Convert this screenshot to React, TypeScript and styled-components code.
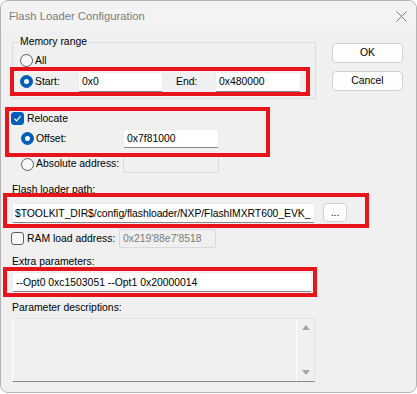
import React from 'react';
import styled, { createGlobalStyle } from 'styled-components';

const GlobalStyle = createGlobalStyle`
  html, body {
    margin: 0;
    padding: 0;
    background: #ffffff;
  }
  body {
    font-family: "Liberation Sans", Arial, sans-serif;
    font-size: 10.4px;
    color: #000000;
  }
  * {
    box-sizing: border-box;
  }
`;

const Window = styled.div`
  width: 417px;
  height: 393px;
  background: #f0f0f0;
  border: 1px solid #b4b4b4;
  border-radius: 8px;
  overflow: hidden;
  display: flex;
  flex-direction: column;
`;

const TitleBar = styled.div`
  height: 30px;
  flex-shrink: 0;
  display: flex;
  align-items: center;
  justify-content: space-between;
  padding: 0 9px 0 8px;
  background: #f3f3f3;
  color: #7b7b7b;
  font-size: 11.25px;
`;

const Body = styled.div`
  display: flex;
  align-items: flex-start;
  padding: 4px 0 0 11px;
`;

const LeftColumn = styled.div`
  width: 304px;
  flex-shrink: 0;
  display: flex;
  flex-direction: column;
`;

const RightColumn = styled.div`
  margin: 8px 0 0 16px;
  display: flex;
  flex-direction: column;
  gap: 8px;
`;

const GroupBox = styled.fieldset`
  margin: 0;
  padding: 0 0 2px 0;
  min-width: 0;
  width: 304px;
  border: 1px solid #dcdcdc;
`;

const GroupTitle = styled.legend`
  margin-left: 6px;
  padding: 0 1px;
  line-height: 14px;
`;

// red annotation frame drawn over the dialog
const Highlight = styled.div<{ $top: number; $left: number; $width: number; $height: number; $padTop?: number; $padLeft?: number }>`
  position: relative;
  flex-shrink: 0;
  margin: ${p => p.$top}px 0 0 ${p => p.$left}px;
  width: ${p => p.$width}px;
  height: ${p => p.$height}px;
  padding: ${p => p.$padTop ?? 0}px 0 0 ${p => p.$padLeft ?? 0}px;
  border: 4px solid #e8141c;
  display: flex;
  flex-direction: column;
`;

const Row = styled.div<{ $height: number; $top?: number; $indent?: number; $align?: string }>`
  display: flex;
  align-items: ${p => p.$align ?? 'center'};
  flex-shrink: 0;
  height: ${p => p.$height}px;
  margin-top: ${p => p.$top ?? 0}px;
  margin-left: ${p => p.$indent ?? 0}px;
`;

const Caption = styled.div<{ $top: number }>`
  margin-top: ${p => p.$top}px;
  line-height: 14px;
  white-space: nowrap;
`;

const FieldLabel = styled.span<{ $width?: number; $gap?: number }>`
  ${p => (p.$width ? `width: ${p.$width}px;` : '')}
  margin-left: ${p => p.$gap ?? 0}px;
  flex-shrink: 0;
  line-height: 14px;
  white-space: nowrap;
`;

const Radio = styled.span<{ $checked?: boolean }>`
  width: 13px;
  height: 13px;
  margin-right: 2px;
  flex-shrink: 0;
  border-radius: 50%;
  display: flex;
  align-items: center;
  justify-content: center;
  background: ${p => (p.$checked ? '#005fb8' : '#f7f7f7')};
  border: 1px solid ${p => (p.$checked ? '#005fb8' : '#5f5f5f')};

  &::after {
    content: '';
    display: ${p => (p.$checked ? 'block' : 'none')};
    width: 5px;
    height: 5px;
    border-radius: 50%;
    background: #ffffff;
  }
`;

const CheckBox = styled.span<{ $checked?: boolean }>`
  width: 13px;
  height: 13px;
  margin-right: 3px;
  flex-shrink: 0;
  border-radius: 3px;
  display: flex;
  align-items: center;
  justify-content: center;
  background: ${p => (p.$checked ? '#005fb8' : '#f7f7f7')};
  border: 1px solid ${p => (p.$checked ? '#005fb8' : '#5f5f5f')};
`;

const TextBox = styled.div<{ $width: number; $height?: number; $disabled?: boolean }>`
  width: ${p => p.$width}px;
  height: ${p => p.$height ?? 20}px;
  flex-shrink: 0;
  display: flex;
  align-items: center;
  padding-left: 3px;
  overflow: hidden;
  white-space: nowrap;
  background: ${p => (p.$disabled ? '#f0f0f0' : '#ffffff')};
  color: ${p => (p.$disabled ? '#7a7a7a' : '#000000')};
  border: 1px solid ${p => (p.$disabled ? '#d9d9d9' : '#ececec')};
  border-bottom-color: ${p => (p.$disabled ? '#d9d9d9' : '#868686')};
  border-radius: 2px;
`;

const PathBox = styled(TextBox)`
  padding-left: 2px;
  letter-spacing: -0.05px;
`;

const DialogButton = styled.button<{ $width: number; $height: number; $gap?: number }>`
  width: ${p => p.$width}px;
  height: ${p => p.$height}px;
  margin: 0 0 0 ${p => p.$gap ?? 0}px;
  padding: 0;
  flex-shrink: 0;
  font: inherit;
  color: #000000;
  background: #fdfdfd;
  border: 1px solid #d0d0d0;
  border-radius: 4px;
  line-height: 14px;
`;

const DescriptionBox = styled.div`
  margin-top: 3px;
  width: 303px;
  height: 64px;
  display: flex;
  background: #f0f0f0;
  border: 1px solid #e2e2e2;
  border-left-color: #ffffff;
  border-bottom-color: #8a8a8a;
`;

const ScrollTrack = styled.div`
  margin-left: auto;
  width: 18px;
  border-left: 1px solid #ffffff;
  display: flex;
  flex-direction: column;
  align-items: center;
  justify-content: space-between;
  padding: 6px 0 6px 0;
`;

const CloseIcon = () => (
  <svg width="11" height="11" viewBox="0 0 11 11">
    <path d="M0.5 0.5 L10.5 10.5 M10.5 0.5 L0.5 10.5" stroke="#7a7a7a" strokeWidth="1" />
  </svg>
);

const CheckMark = () => (
  <svg width="9" height="9" viewBox="0 0 9 9">
    <path d="M1.5 4.8 L3.6 6.8 L7.6 2.2" fill="none" stroke="#ffffff" strokeWidth="1.2" />
  </svg>
);

const Arrow = ({ down }: { down?: boolean }) => (
  <svg width="8" height="5" viewBox="0 0 8 5">
    <path d={down ? 'M0 0 L8 0 L4 5 Z' : 'M0 5 L8 5 L4 0 Z'} fill="#a3a3a3" />
  </svg>
);

export default function App() {
  return (
    <>
      <GlobalStyle />
      <Window>
        <TitleBar>
          <span>Flash Loader Configuration</span>
          <CloseIcon />
        </TitleBar>
        <Body>
          <LeftColumn>
            <GroupBox>
              <GroupTitle>Memory range</GroupTitle>
              <Row $height={13} $top={5} $indent={7}>
                <Radio />
                <FieldLabel>All</FieldLabel>
              </Row>
              <Highlight $top={0} $left={-3} $width={300} $height={29}>
                <Row $height={21} $indent={6}>
                  <Radio $checked />
                  <FieldLabel $width={43}>Start:</FieldLabel>
                  <TextBox $width={85}>0x0</TextBox>
                  <FieldLabel $width={39} $gap={13}>End:</FieldLabel>
                  <TextBox $width={86}>0x480000</TextBox>
                </Row>
              </Highlight>
            </GroupBox>

            <Highlight $top={8} $left={-7} $width={265} $height={50}>
              <Row $height={13} $top={1} $indent={2}>
                <CheckBox $checked>
                  <CheckMark />
                </CheckBox>
                <FieldLabel>Relocate</FieldLabel>
              </Row>
              <Row $height={19} $top={4} $indent={12}>
                <Radio $checked />
                <FieldLabel $width={87}>Offset:</FieldLabel>
                <TextBox $width={96} $height={19}>0x7f81000</TextBox>
              </Row>
            </Highlight>

            <Row $height={18} $top={-2} $indent={9}>
              <Radio />
              <FieldLabel $width={87}>Absolute address:</FieldLabel>
              <TextBox $width={96} $height={18} $disabled />
            </Row>

            <Caption $top={10}>Flash loader path:</Caption>
            <Highlight $top={-4} $left={-9} $width={366} $height={35} $padTop={6} $padLeft={5}>
              <Row $height={20} $align="flex-start">
                <PathBox $width={303}>$TOOLKIT_DIR$/config/flashloader/NXP/FlashIMXRT600_EVK_</PathBox>
                <DialogButton $width={24} $height={19} $gap={8}>...</DialogButton>
              </Row>
            </Highlight>

            <Row $height={19} $top={1} $indent={-1}>
              <CheckBox />
              <FieldLabel $width={92}>RAM load address:</FieldLabel>
              <TextBox $width={97} $height={19} $disabled>0x219'88e7'8518</TextBox>
            </Row>

            <Caption $top={7}>Extra parameters:</Caption>
            <Highlight $top={-2} $left={-9} $width={314} $height={30} $padLeft={5}>
              <Row $height={22}>
                <TextBox $width={300}>--Opt0 0xc1503051 --Opt1 0x20000014</TextBox>
              </Row>
            </Highlight>

            <Caption $top={4}>Parameter descriptions:</Caption>
            <DescriptionBox>
              <ScrollTrack>
                <Arrow />
                <Arrow down />
              </ScrollTrack>
            </DescriptionBox>
          </LeftColumn>

          <RightColumn>
            <DialogButton $width={71} $height={20}>OK</DialogButton>
            <DialogButton $width={71} $height={20}>Cancel</DialogButton>
          </RightColumn>
        </Body>
      </Window>
    </>
  );
}
